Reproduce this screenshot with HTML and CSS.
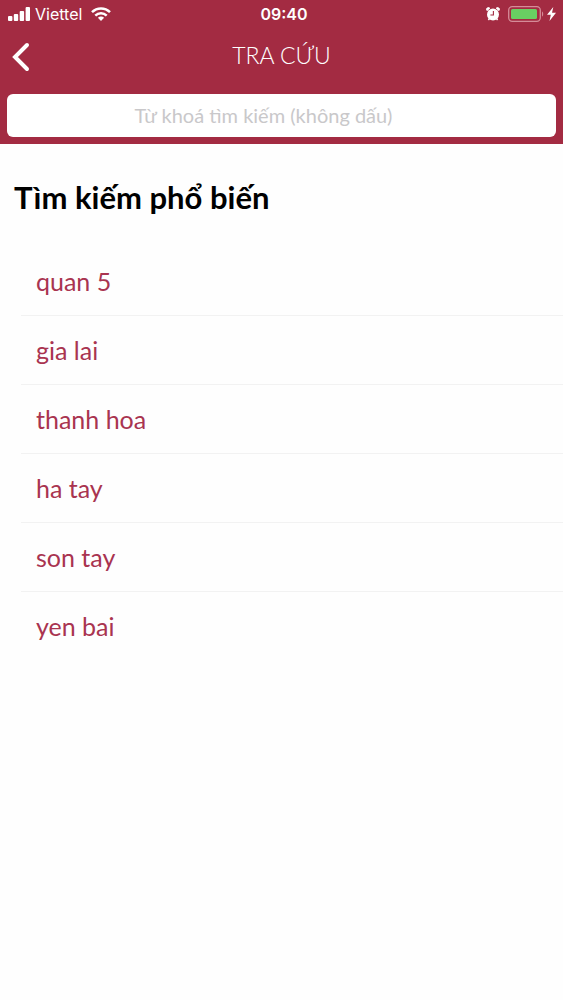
FILE: index.html
```html
<!DOCTYPE html>
<html lang="vi">
<head>
  <meta charset="UTF-8">
  <meta name="viewport" content="width=device-width, initial-scale=1.0">
  <title>Tra cứu</title>
  <link rel="stylesheet" href="styles.css">
</head>
<body>
  <header class="header">
    <!-- Status Bar -->
    <div class="status-bar">
      <div class="status-left">
        <svg class="signal" width="22" height="14" viewBox="0 0 22 14" fill="#fff" aria-hidden="true">
          <rect x="0" y="9" width="4.4" height="5" rx="1"/>
          <rect x="5.8" y="7" width="4.4" height="7" rx="1"/>
          <rect x="11.7" y="4" width="4.4" height="10" rx="1"/>
          <rect x="17.6" y="0" width="4.4" height="14" rx="1"/>
        </svg>
        <span class="carrier">Viettel</span>
        <svg class="wifi" width="20" height="14" viewBox="0 0 20 14" fill="none" stroke="#fff" stroke-width="2.5" aria-hidden="true">
          <path d="M1 5.2C6 0.2 14 0.2 19 5.2"/>
          <path d="M4.3 8.6C7.5 5.5 12.5 5.5 15.7 8.6"/>
          <path d="M10 14L6.9 10.7C8.6 9.2 11.4 9.2 13.1 10.7Z" fill="#fff" stroke="none"/>
        </svg>
      </div>
      <span class="time">09:40</span>
      <div class="status-right">
        <svg class="alarm" width="14" height="14" viewBox="0 0 14 14" aria-hidden="true">
          <path d="M1 3.6A1.8 1.8 0 0 1 3.8 1.2ZM13 3.6A1.8 1.8 0 0 0 10.2 1.2Z" fill="#fff" stroke="#fff"/>
          <path d="M3.5 11.5L2.4 13M10.5 11.5L11.6 13" stroke="#fff" stroke-width="1.5"/>
          <circle cx="7" cy="7.4" r="6" fill="#fff"/>
          <path d="M7.4 4V8H4.4" fill="none" stroke="#a32b42" stroke-width="1.1"/>
        </svg>
        <svg class="battery" width="36" height="16" viewBox="0 0 36 16" aria-hidden="true">
          <rect x="0.7" y="0.7" width="31.6" height="14.6" rx="3.5" fill="none" stroke="#d58c98" stroke-width="1.3"/>
          <rect x="3" y="3" width="26" height="10" rx="1.5" fill="#69cf62"/>
          <path d="M34 5.5C35.6 6 35.6 10 34 10.5Z" fill="#d58c98"/>
        </svg>
        <svg class="bolt" width="9" height="14" viewBox="0 0 9 14" fill="#fff" aria-hidden="true">
          <path d="M6.3 0L0 7.8H3.8L2.5 14L9 5.8H5Z"/>
        </svg>
      </div>
    </div>
    <!-- Title Bar -->
    <div class="title-bar">
      <button class="back" type="button" aria-label="Quay lại">
        <svg width="18" height="30" viewBox="0 0 18 30" fill="none" stroke="#fff" stroke-width="4" stroke-linecap="round" stroke-linejoin="miter" aria-hidden="true">
          <path d="M15 3L3 15L15 27"/>
        </svg>
      </button>
      <h1>TRA CỨU</h1>
    </div>
    <!-- Search Box -->
    <form class="search">
      <input type="text" placeholder="Từ khoá tìm kiếm (không dấu)" aria-label="Từ khoá tìm kiếm (không dấu)">
    </form>
  </header>
  <main>
    <h2>Tìm kiếm phổ biến</h2>
    <ul class="popular">
      <li><a href="#">quan 5</a></li>
      <li><a href="#">gia lai</a></li>
      <li><a href="#">thanh hoa</a></li>
      <li><a href="#">ha tay</a></li>
      <li><a href="#">son tay</a></li>
      <li><a href="#">yen bai</a></li>
    </ul>
  </main>
</body>
</html>
```
FILE: styles.css
```css
/* General Reset */
body, h1, h2, ul, li, input, button {
  margin: 0;
  padding: 0;
  font-family: Lato, 'Open Sans', sans-serif;
}

* {
  box-sizing: border-box;
}

body {
  background-color: #fefefe;
  color: #000;
}

svg {
  display: block;
}

/* Header */
.header {
  background-color: #a32b42;
  color: #fff;
  padding-bottom: 7px;
}

.status-bar {
  display: grid;
  grid-template-columns: 1fr auto 1fr;
  align-items: center;
  height: 28px;
  padding: 0 7px 0 8px;
  font-family: Inter, sans-serif;
  font-size: 16px;
}

.status-left, .status-right {
  display: flex;
  align-items: center;
}

.status-right {
  justify-content: flex-end;
}

.carrier {
  margin: 0 9px 0 5px;
}

.time {
  padding-left: 4px;
  font-weight: 600;
}

.alarm {
  margin-right: 8px;
}

.bolt {
  margin-left: 3px;
}

.title-bar {
  display: grid;
  grid-template-columns: 40px 1fr 40px;
  align-items: center;
  height: 58px;
  margin-bottom: 8px;
}

.back {
  padding-left: 12px;
  border: none;
  background: none;
  cursor: pointer;
}

h1 {
  padding-bottom: 4px;
  font-size: 23px;
  font-weight: 300;
  text-align: center;
}

/* Search */
.search {
  padding: 0 7px;
}

.search input {
  display: block;
  width: 100%;
  height: 43px;
  padding: 0 40px 2px 4px;
  border: none;
  border-radius: 6px;
  background-color: #fff;
  font-size: 20px;
  text-align: center;
}

.search input::placeholder {
  color: #c9c8ca;
}

/* Popular Searches */
h2 {
  padding: 35px 14px 32px;
  font-size: 31px;
  line-height: 36px;
}

.popular {
  padding-left: 21px;
  list-style: none;
}

.popular li {
  border-bottom: 1px solid #f2f2f2;
}

.popular li:last-child {
  border-bottom: none;
}

.popular a {
  display: block;
  padding: 0 15px;
  color: #a93450;
  font-size: 25px;
  line-height: 68px;
  text-decoration: none;
}
```
